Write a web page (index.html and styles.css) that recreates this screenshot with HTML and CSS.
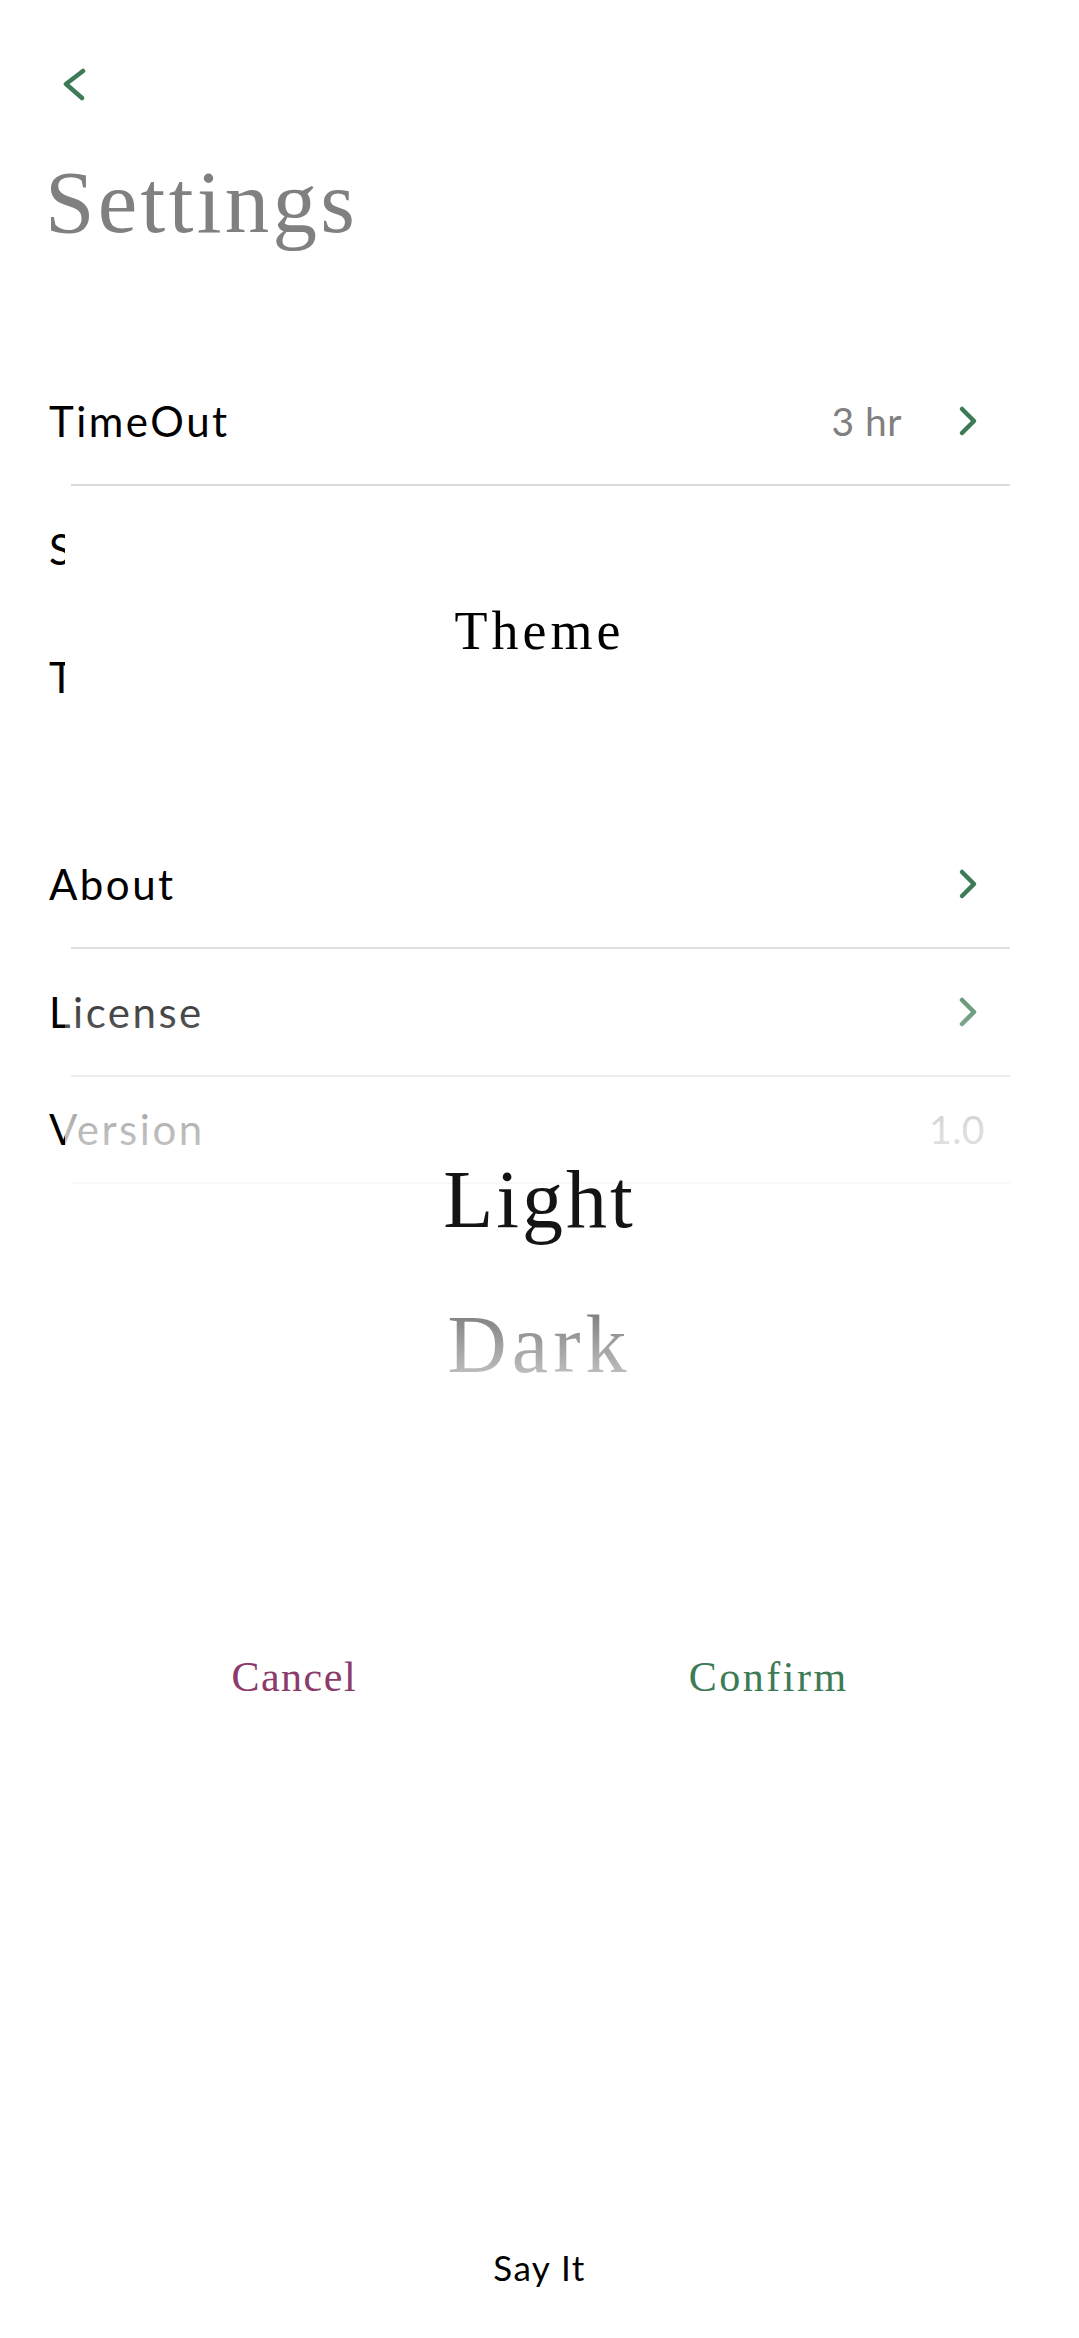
FILE: index.html
```html
<!DOCTYPE html>
<html lang="en">
<head>
<meta charset="utf-8">
<title>Settings</title>
<link rel="stylesheet" href="styles.css">
</head>
<body>
<div class="screen">
  <header class="top">
    <button class="back" aria-label="Back">
      <svg width="24" height="34" viewBox="0 0 24 34"><path d="M21 4 L4 17 L20 31" fill="none" stroke="#3d7a56" stroke-width="4.5" stroke-linecap="round" stroke-linejoin="round"/></svg>
    </button>
    <h1 class="title">Settings</h1>
  </header>

  <section class="group">
    <div class="row">
      <span class="label">TimeOut</span>
      <span class="meta">3 hr</span>
      <svg class="chev" width="22" height="32" viewBox="0 0 22 32"><path d="M5 4 L17 16 L5 28" fill="none" stroke="#3d7a56" stroke-width="4.5" stroke-linecap="round" stroke-linejoin="round"/></svg>
    </div>
    <div class="sep"></div>
    <div class="row">
      <span class="label">Speech</span>
      <svg class="chev" width="22" height="32" viewBox="0 0 22 32"><path d="M5 4 L17 16 L5 28" fill="none" stroke="#3d7a56" stroke-width="4.5" stroke-linecap="round" stroke-linejoin="round"/></svg>
    </div>
    <div class="sep"></div>
    <div class="row">
      <span class="label">Theme</span>
      <svg class="chev" width="22" height="32" viewBox="0 0 22 32"><path d="M5 4 L17 16 L5 28" fill="none" stroke="#3d7a56" stroke-width="4.5" stroke-linecap="round" stroke-linejoin="round"/></svg>
    </div>
    <div class="sep"></div>
  </section>

  <section class="group group-2">
    <div class="row">
      <span class="label">About</span>
      <svg class="chev" width="22" height="32" viewBox="0 0 22 32"><path d="M5 4 L17 16 L5 28" fill="none" stroke="#3d7a56" stroke-width="4.5" stroke-linecap="round" stroke-linejoin="round"/></svg>
    </div>
    <div class="sep"></div>
    <div class="row">
      <span class="label">License</span>
      <svg class="chev" width="22" height="32" viewBox="0 0 22 32"><path d="M5 4 L17 16 L5 28" fill="none" stroke="#3d7a56" stroke-width="4.5" stroke-linecap="round" stroke-linejoin="round"/></svg>
    </div>
    <div class="sep"></div>
    <div class="row row-short">
      <span class="label">Version</span>
      <span class="meta meta-end">1.0</span>
    </div>
    <div class="sep"></div>
  </section>

  <footer class="brand">Say It</footer>

  <div class="dialog">
    <div class="dlg-head">Theme</div>
    <div class="wheel">
      <div class="opt opt-on">Light</div>
      <div class="opt opt-dark"><span class="opt-off">Dark</span></div>
    </div>
    <div class="actions">
      <div class="btn btn-cancel">Cancel</div>
      <div class="btn btn-confirm">Confirm</div>
    </div>
  </div>
</div>
</body>
</html>
```

FILE: styles.css
```css
html, body {
  margin: 0;
  padding: 0;
  background: #ffffff;
}

.screen {
  position: relative;
  width: 1079px;
  height: 2338px;
  overflow: hidden;
  display: flex;
  flex-direction: column;
  font-family: Lato, "Open Sans", sans-serif;
  color: #000;
}

.top {
  padding-top: 67px;
}

.back {
  display: block;
  margin: 0 0 0 62px;
  padding: 0;
  border: 0;
  background: none;
  width: 24px;
  height: 34px;
}

.back svg {
  display: block;
}

.title {
  margin: 51px 0 0 45px;
  font-family: "Liberation Serif", serif;
  font-weight: 400;
  font-size: 89px;
  line-height: 100px;
  letter-spacing: 3.3px;
  color: #808080;
}

.group {
  margin-top: 106px;
}

.group-2 {
  margin-top: 79px;
}

.row {
  display: flex;
  align-items: center;
  height: 126px;
  padding: 0 100px 0 49px;
}

.row-short {
  height: 105px;
  padding-right: 94px;
}

.label {
  flex: 1;
  font-size: 42px;
  line-height: 1.2;
  letter-spacing: 2.5px;
}

.meta {
  font-size: 39px;
  line-height: 1.2;
  color: #808080;
  margin-right: 55px;
  letter-spacing: 0.5px;
}

.meta-end {
  margin-right: 0;
}

.chev {
  display: block;
}

.sep {
  height: 2px;
  background: #dadada;
  margin: 0 69px 0 71px;
}

.brand {
  margin-top: auto;
  padding-bottom: 50px;
  text-align: center;
  font-size: 35px;
  line-height: 42px;
  letter-spacing: 1.5px;
}

.dialog {
  position: absolute;
  left: 65px;
  right: 65px;
  top: 500px;
  z-index: 2;
  display: flex;
  flex-direction: column;
  font-family: "Liberation Serif", serif;
}

.dlg-head {
  height: 280px;
  box-sizing: border-box;
  padding-top: 104px;
  background: #ffffff;
  text-align: center;
  font-size: 54px;
  line-height: 54px;
  letter-spacing: 4px;
  color: #000;
}

.wheel {
  height: 820px;
  box-sizing: border-box;
  padding-top: 347px;
  background: linear-gradient(to bottom,
    rgba(255,255,255,0) 0px,
    rgba(255,255,255,0) 110px,
    rgba(255,255,255,0.27) 232px,
    rgba(255,255,255,0.73) 350px,
    rgba(255,255,255,0.82) 405px,
    #ffffff 470px);
}

.opt {
  height: 145px;
  line-height: 145px;
  font-size: 82px;
  text-align: center;
  letter-spacing: 3px;
}

.opt-on {
  color: #141414;
}

.opt-dark {
  letter-spacing: 5px;
}

.opt-off {
  background: linear-gradient(to bottom, #737373, #cdcdcd);
  -webkit-background-clip: text;
  background-clip: text;
  color: transparent;
}

.actions {
  display: flex;
  height: 160px;
  box-sizing: border-box;
  padding-top: 56px;
  margin: 0 8px 0 -8px;
  background: #ffffff;
}

.btn {
  flex: 1;
  text-align: center;
  font-size: 42px;
  line-height: 42px;
  letter-spacing: 1.5px;
}

.btn-cancel {
  color: #8a3b6c;
}

.btn-confirm {
  color: #3d7a56;
  letter-spacing: 2.5px;
}
```
